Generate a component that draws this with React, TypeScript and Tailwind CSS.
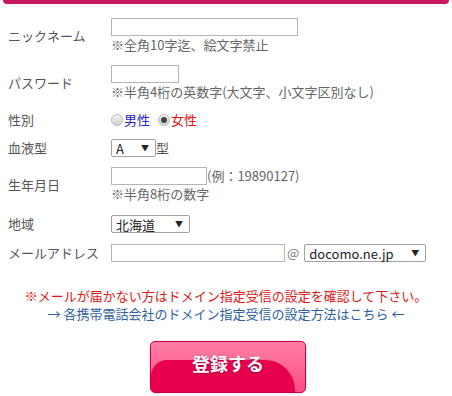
import React from 'react';

const font = { fontFamily: '"Noto Sans CJK JP", "Noto Sans", sans-serif' };

function Row({ label, className = '', children }: { label: string; className?: string; children: React.ReactNode }) {
  return (
    <div className={`flex items-center ${className}`}>
      <div className="w-[103px] shrink-0 text-[13px] text-[#555]">{label}</div>
      <div className="flex flex-col">{children}</div>
    </div>
  );
}

function TextBox({ w }: { w: string }) {
  return <div className={`h-[18px] border border-[#b4b4b4] bg-white ${w}`} />;
}

function Select({ value, w }: { value: string; w: string }) {
  return (
    <div className={`flex h-[18px] items-center justify-between rounded-[2px] border border-[#a0a0a0] bg-white pl-[4px] pr-[6px] text-[13px] leading-none text-[#222] ${w}`}>
      <span>{value}</span>
      <span className="text-[8px]">▼</span>
    </div>
  );
}

function Radio({ checked }: { checked?: boolean }) {
  return (
    <span className="mr-[1px] flex h-[12px] w-[12px] items-center justify-center rounded-full border border-[#bdbdbd] bg-gradient-to-b from-[#f4f4f4] to-[#cfcfcf]">
      {checked && <span className="h-[6px] w-[6px] rounded-full bg-[#444]" />}
    </span>
  );
}

const Note = ({ children }: { children: React.ReactNode }) => (
  <div className="h-[18px] text-[13px] text-[#666]">{children}</div>
);

export default function App() {
  return (
    <div className="h-[396px] w-[452px] bg-white leading-[18px]" style={font}>
      <div className="mx-[3px] h-[4px] rounded-b-[6px] bg-[#c8175a]" />

      <div className="flex flex-col pl-[8px]">
        <Row label="ニックネーム" className="mt-[14px]">
          <TextBox w="w-[187px]" />
          <Note>※全角10字迄、絵文字禁止</Note>
        </Row>

        <Row label="パスワード" className="mt-[11px]">
          <TextBox w="w-[68px]" />
          <Note>※半角4桁の英数字(大文字、小文字区別なし)</Note>
        </Row>

        <Row label="性別" className="mt-[10px]">
          <div className="flex h-[18px] items-center text-[13px]">
            <Radio />
            <span className="text-[#2626c8]">男性</span>
            <span className="ml-[8px]" />
            <Radio checked />
            <span className="text-[#e01010]">女性</span>
          </div>
        </Row>

        <Row label="血液型" className="mt-[10px]">
          <div className="flex h-[18px] items-center text-[13px] text-[#555]">
            <Select value="A" w="w-[45px]" />
            <span>型</span>
          </div>
        </Row>

        <Row label="生年月日" className="mt-[10px]">
          <div className="flex h-[18px] items-center text-[13px] text-[#666]">
            <TextBox w="w-[96px]" />
            <span>(例：19890127)</span>
          </div>
          <Note>※半角8桁の数字</Note>
        </Row>

        <Row label="地域" className="mt-[12px]">
          <Select value="北海道" w="w-[79px]" />
        </Row>

        <Row label="メールアドレス" className="mt-[11px]">
          <div className="flex h-[18px] items-center text-[13px] text-[#777]">
            <TextBox w="w-[174px]" />
            <span className="ml-[2px] mr-[5px]">@</span>
            <Select value="docomo.ne.jp" w="w-[122px]" />
          </div>
        </Row>
      </div>

      <div className="mt-[25px] flex flex-col items-center text-[13px]">
        <div className="text-[#e01818]">※メールが届かない方はドメイン指定受信の設定を確認して下さい。</div>
        <div className="text-[#2f5f9f]">→ 各携帯電話会社のドメイン指定受信の設定方法はこちら ←</div>
      </div>

      <div className="mt-[18px] flex justify-center pl-[4px]">
        <div className="relative h-[52px] w-[156px] overflow-hidden rounded-[5px] border border-[#c0004a] bg-gradient-to-b from-[#ff7ea4] to-[#ff4a84] shadow-[0_0_2px_#ffb0cc]">
          <div className="absolute bottom-0 left-0 right-[10px] top-[18px] rounded-tl-[16px] rounded-tr-[30px] bg-[#e6004e]" />
          <div className="relative flex h-full items-center justify-center pb-[8px] text-[18px] font-bold text-white [text-shadow:0_1px_2px_#a0003a]">
            登録する
          </div>
        </div>
      </div>
    </div>
  );
}
